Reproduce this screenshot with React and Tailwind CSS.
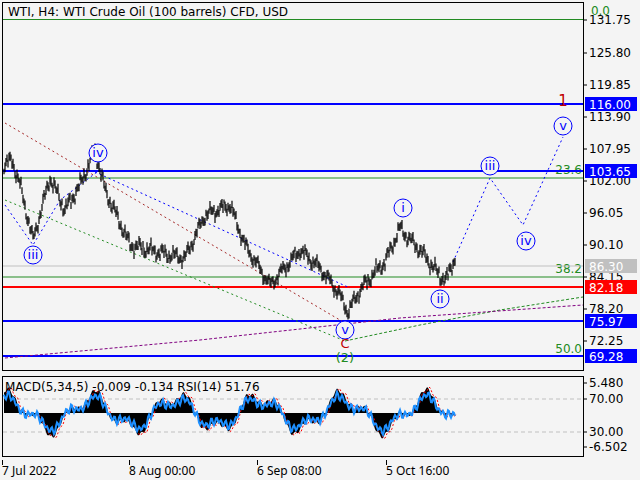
const keys = [[4,165],[12,160],[20,185],[33,240],[50,178],[65,210],[80,185],[95,150],[105,190],[130,245],[170,255],[185,258],[205,215],[230,205],[245,245],[270,285],[300,250],[320,268],[338,292],[348,312],[360,290],[375,272],[385,262],[400,228],[410,240],[420,250],[440,276],[446,280],[455,258]];

function interp(x) {
  for (let i = 0; i < keys.length - 1; i++) {
    const [x0, y0] = keys[i], [x1, y1] = keys[i + 1];
    if (x >= x0 && x <= x1) return y0 + ((y1 - y0) * (x - x0)) / (x1 - x0);
  }
  return keys[keys.length - 1][1];
}

const bars = [];
for (let x = 4; x <= 455; x += 1) {
  const n = Math.sin(x * 1.7) * 3 + Math.sin(x * 0.53) * 4 + Math.cos(x * 3.1) * 1.5;
  const y = interp(x) + n;
  bars.push([x, y - 2 - Math.abs(Math.sin(x * 2.3)) * 3, y + 2 + Math.abs(Math.cos(x * 1.9)) * 3]);
}

const macd = [];
for (let x = 4; x <= 455; x += 1) {
  const v = Math.sin(x * 0.075 + 1) * 17 + Math.sin(x * 0.21) * 7 + Math.sin(x * 0.9) * 2;
  macd.push([x, 413 - v]);
}

const yLabels = [["131.75",20],["125.80",53],["119.85",85],["113.90",117],["107.95",149],["102.00",181],["96.05",213],["90.10",245],["84.15",277],["78.20",309],["72.25",341]];
const boxes = [["116.00",104,"#0000ff"],["103.65",171,"#0000ff"],["86.30",266,"#c0c0c0"],["82.18",287,"#ff0000"],["75.97",321,"#0000ff"],["69.28",356,"#0000ff"]];
const waves = [["iii",33,255],["iv",98,153],["i",403,208],["ii",440,299],["iii",490,166],["iv",526,241],["v",563,126],["v",345,330]];

function PriceChart() {
  return (
    <svg width="640" height="372" className="block" fontFamily="Tahoma, 'DejaVu Sans', sans-serif">
      <rect x="2.5" y="2.5" width="581" height="368" fill="none" stroke="#000" />
      <text x="8" y="16" fontSize="12" fill="#000">WTI, H4:  WTI Crude Oil (100 barrels) CFD, USD</text>
      <line x1="3" y1="19.5" x2="583" y2="19.5" stroke="#228b22" />
      <text x="610" y="15" fontSize="12" fill="#228b22" textAnchor="end">0.0</text>
      <line x1="3" y1="178" x2="583" y2="178" stroke="#228b22" />
      <text x="582" y="174" fontSize="12" fill="#228b22" textAnchor="end">23.6</text>
      <line x1="3" y1="277" x2="583" y2="277" stroke="#228b22" />
      <text x="582" y="273" fontSize="12" fill="#228b22" textAnchor="end">38.2</text>
      <text x="582" y="353" fontSize="12" fill="#228b22" textAnchor="end">50.0</text>
      <line x1="3" y1="266" x2="583" y2="266" stroke="#c0c0c0" />
      <line x1="3" y1="287" x2="583" y2="287" stroke="#ff0000" strokeWidth="2" />
      {[104, 171, 321, 356].map(y => <line key={y} x1="3" y1={y} x2="583" y2={y} stroke="#0000ff" strokeWidth="2" />)}
      <line x1="5" y1="123" x2="345" y2="323" stroke="#a52a2a" strokeDasharray="2 3" />
      <line x1="95" y1="172" x2="350" y2="288" stroke="#0000ff" strokeDasharray="2 3" />
      <line x1="5" y1="200" x2="345" y2="341" stroke="#228b22" strokeDasharray="2 3" />
      <polyline points="345,341 420,325 500,310 583,297" fill="none" stroke="#228b22" strokeDasharray="3 2" />
      <polyline points="5,358 200,340 400,318 583,305" fill="none" stroke="#800080" strokeDasharray="3 2" />
      <polyline points="5,205 33,245 60,200 97,172" fill="none" stroke="#0000ff" strokeDasharray="2 3" />
      <polyline points="453,262 490,178 523,225 563,137" fill="none" stroke="#0000ff" strokeDasharray="2 3" />
      {bars.map(([x, a, b]) => <line key={x} x1={x} y1={a} x2={x} y2={b} stroke="#000" strokeWidth="1.2" />)}
      {waves.map(([t, x, y], i) => (
        <g key={i}>
          <circle cx={x} cy={y} r="9" fill="#f4f4f4" stroke="#0000ff" />
          <text x={x} y={y + 4} fontSize="13" fill="#0000ff" textAnchor="middle">{t}</text>
        </g>
      ))}
      <text x="563" y="106" fontSize="15" fill="#c00000" textAnchor="middle">1</text>
      <text x="345" y="348" fontSize="13" fill="#c00000" textAnchor="middle">C</text>
      <text x="345" y="362" fontSize="13" fill="#228b22" textAnchor="middle">(2)</text>
      {yLabels.map(([t, y]) => (
        <g key={t}>
          <line x1="583" y1={y} x2="587" y2={y} stroke="#000" />
          <text x="589" y={y + 4} fontSize="12" fill="#000">{t}</text>
        </g>
      ))}
      {boxes.map(([t, y, c]) => (
        <g key={t}>
          <rect x="585" y={y - 7} width="52" height="14" fill={c} />
          <text x="589" y={y + 5} fontSize="12" fill="#fff">{t}</text>
        </g>
      ))}
    </svg>
  );
}

function MacdChart() {
  const pts = macd.map(([x, y]) => `${x},${y}`).join(" ");
  const rsi = macd.map(([x, y]) => `${x},${413 + (y - 413) * 0.75 + Math.sin(x * 1.3) * 3}`).join(" ");
  return (
    <svg width="640" height="88" viewBox="0 372 640 88" className="block" fontFamily="Tahoma, 'DejaVu Sans', sans-serif">
      <rect x="2.5" y="376.5" width="581" height="80" fill="none" stroke="#000" />
      <line x1="3" y1="399" x2="583" y2="399" stroke="#c0c0c0" strokeDasharray="4 3" />
      <line x1="3" y1="432" x2="583" y2="432" stroke="#c0c0c0" strokeDasharray="4 3" />
      <polygon points={`4,413 ${pts} 455,413`} fill="#000" />
      <polyline points={macd.map(([x, y]) => `${x + 2},${y}`).join(" ")} fill="none" stroke="#ff0000" strokeDasharray="2 2" />
      <polyline points={rsi} fill="none" stroke="#1e90ff" strokeWidth="2" />
      <text x="5" y="391" fontSize="12" fill="#000">MACD(5,34,5) -0.009 -0.134 RSI(14) 51.76</text>
      {[["5.480",383],["70.00",399],["30.00",432],["-6.502",447]].map(([t, y]) => (
        <g key={t}>
          <line x1="583" y1={y} x2="587" y2={y} stroke="#000" />
          <text x="589" y={y + 4} fontSize="12" fill="#000">{t}</text>
        </g>
      ))}
    </svg>
  );
}

export default function App() {
  return (
    <div className="w-[640px] h-[480px] bg-[#f4f4f4] overflow-hidden font-['Liberation_Sans',sans-serif]">
      <PriceChart />
      <MacdChart />
      <div className="relative h-[20px] text-[12px] text-black">
        {[["7 Jul 2022", 2], ["8 Aug 00:00", 129], ["6 Sep 08:00", 257], ["5 Oct 16:00", 386]].map(([t, x]) => (
          <div key={t} className="absolute top-0 flex items-start" style={{ left: x }}>
            <div className="w-px h-[5px] bg-black" />
            <span className="ml-[-1px] mt-[2px]">{t}</span>
          </div>
        ))}
      </div>
    </div>
  );
}
